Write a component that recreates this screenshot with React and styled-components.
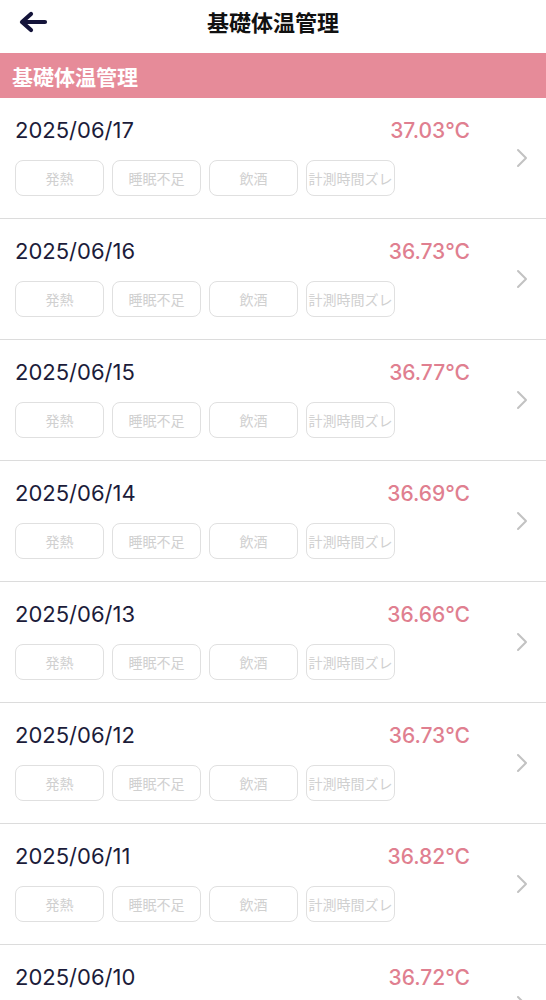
import React from 'react';
import styled, { createGlobalStyle } from 'styled-components';

const GlobalStyle = createGlobalStyle`
  body {
    margin: 0;
    background: #ffffff;
    font-family: "Noto Sans CJK JP", "Noto Sans", sans-serif;
  }
`;

const records = [
    { date: '2025/06/17', temp: '37.03' },
    { date: '2025/06/16', temp: '36.73' },
    { date: '2025/06/15', temp: '36.77' },
    { date: '2025/06/14', temp: '36.69' },
    { date: '2025/06/13', temp: '36.66' },
    { date: '2025/06/12', temp: '36.73' },
    { date: '2025/06/11', temp: '36.82' },
    { date: '2025/06/10', temp: '36.72' },
];

const tags = ['発熱', '睡眠不足', '飲酒', '計測時間ズレ'];

const BackArrow = () => (
    <svg width="32" height="24" viewBox="0 0 32 24">
        <path d="M28 12 H6 M14 4 L5 12 L14 20" fill="none" stroke="#14143a"
            strokeWidth="4.2" strokeLinecap="round" strokeLinejoin="round" />
    </svg>
);

const Chevron = () => (
    <svg width="14" height="20" viewBox="0 0 14 20">
        <path d="M3 2 L11 10 L3 18" fill="none" stroke="#c2c2c2"
            strokeWidth="2" strokeLinecap="round" strokeLinejoin="round" />
    </svg>
);

function App() {
    return (
        <Page>
            <GlobalStyle />
            <Header>
                <BackButton><BackArrow /></BackButton>
                <Title>基礎体温管理</Title>
            </Header>
            <SectionBar>基礎体温管理</SectionBar>
            <List>
                {records.map((r) => (
                    <Row key={r.date}>
                        <Content>
                            <TopLine>
                                <DateText>{r.date}</DateText>
                                <Temp>{r.temp}℃</Temp>
                            </TopLine>
                            <Tags>
                                {tags.map((t) => (
                                    <Tag key={t}>{t}</Tag>
                                ))}
                            </Tags>
                        </Content>
                        <Arrow><Chevron /></Arrow>
                    </Row>
                ))}
            </List>
        </Page>
    );
}

export default App;

const Page = styled.div`
    width: 546px;
    height: 1000px;
    overflow: hidden;
    background: #fff;
`;

const Header = styled.header`
    position: relative;
    height: 53px;
    display: flex;
    align-items: center;
    justify-content: center;
`;

const BackButton = styled.div`
    position: absolute;
    left: 17px;
    top: 10px;
    display: flex;
`;

const Title = styled.h1`
    margin: 0 0 12px;
    font-size: 22px;
    font-weight: 700;
    color: #111;
`;

const SectionBar = styled.div`
    height: 45px;
    background: #e68b99;
    color: #fff;
    font-size: 21px;
    font-weight: 700;
    display: flex;
    align-items: center;
    padding-left: 12px;
`;

const List = styled.div`
    display: flex;
    flex-direction: column;
`;

const Row = styled.div`
    display: flex;
    align-items: center;
    height: 120px;
    border-bottom: 1px solid #dcdcdc;
`;

const Content = styled.div`
    width: 455px;
    padding: 18px 0 21px 15px;
    display: flex;
    flex-direction: column;
    gap: 17px;
`;

const TopLine = styled.div`
    display: flex;
    justify-content: space-between;
    align-items: center;
    height: 26px;
    font-family: Inter, "Noto Sans CJK JP", sans-serif;
`;

const DateText = styled.span`
    font-size: 22px;
    color: #1c1c3a;
    font-weight: 400;
`;

const Temp = styled.span`
    font-size: 21px;
    color: #e07f90;
    font-weight: 500;
`;

const Tags = styled.div`
    display: flex;
    gap: 8px;
`;

const Tag = styled.div`
    width: 89px;
    height: 36px;
    box-sizing: border-box;
    border: 1.5px solid #e0e0e0;
    border-radius: 8px;
    display: flex;
    align-items: center;
    justify-content: center;
    font-size: 14px;
    color: #d0d0d0;
    white-space: nowrap;
    overflow: hidden;
`;

const Arrow = styled.div`
    flex: 1;
    display: flex;
    justify-content: flex-end;
    padding-right: 17px;
`;
